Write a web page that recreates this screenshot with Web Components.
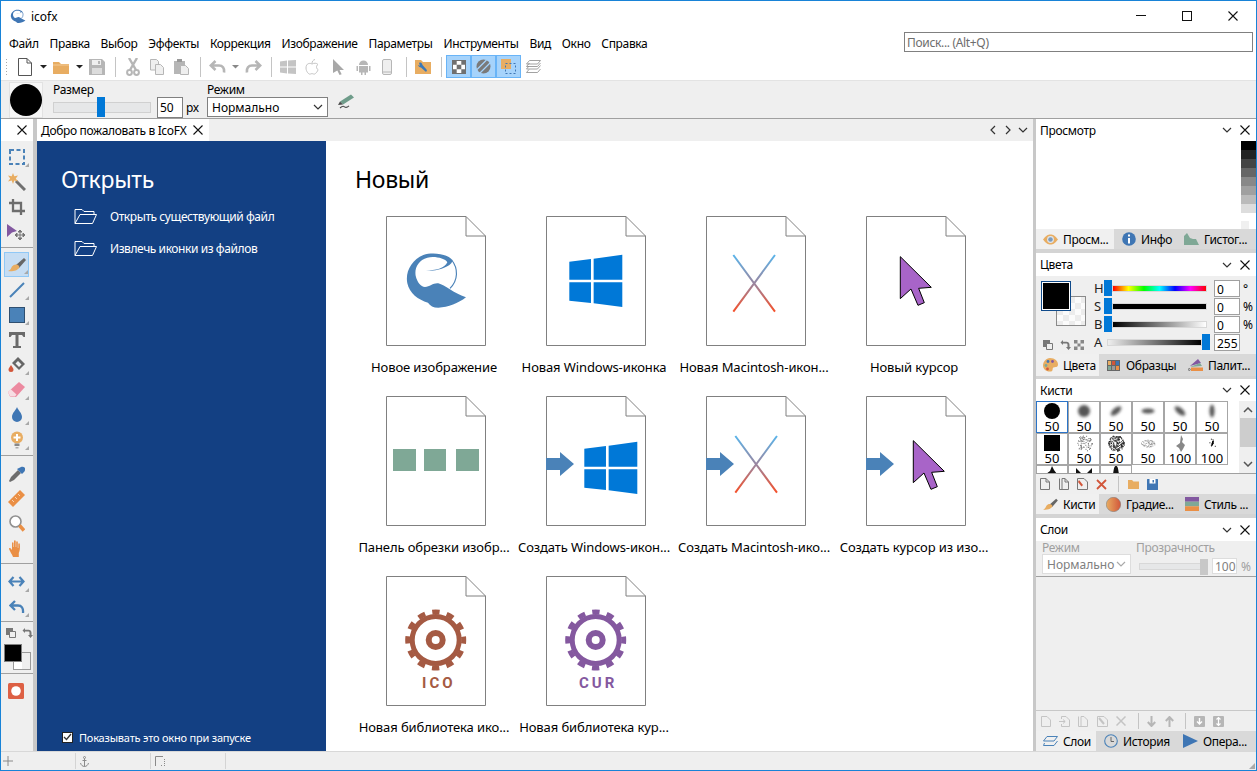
<!DOCTYPE html>
<html lang="ru">
<head>
<meta charset="utf-8">
<title>IcoFX</title>
<style>
  html, body { margin: 0; padding: 0; background: #efefef; }
  body { font: 12px "Noto Sans", "Open Sans", sans-serif; color: #000; overflow: hidden; }
</style>
</head>
<body>
<app-window></app-window>
<script>
const D = "#b6b6b6";
const B = "#4a82b8";
const O = "#e8ad62";
const P = "#c4c4c4";

function seeded(seed) {
  let s = seed;
  return () => { s = (s * 16807) % 2147483647; return s / 2147483647; };
}

const LOGO = "M228 197C255 197 285 190 292 172C285 160 255 153 232 158C205 165 193 190 197 212C202 232 212 245 225 246C240 245 250 233 265 235C285 240 310 265 348 277C325 295 295 307 265 308C250 308 240 302 234 293C205 285 178 265 172 235C165 200 185 165 220 150C250 140 295 148 307 165C310 180 270 200 228 197Z";

const ICONS = {
  chev: [10, 6, `<path d="M1 1l4 4 4-4" fill="none" stroke="#333" stroke-width="1.2"/>`],
  chevl: [10, 6, `<path d="M1 1l4 4 4-4" fill="none" stroke="#aaa" stroke-width="1.2"/>`],
  left: [6, 10, `<path d="M5 1L1 5l4 4" fill="none" stroke="#333" stroke-width="1.2"/>`],
  right: [6, 10, `<path d="M1 1l4 4-4 4" fill="none" stroke="#333" stroke-width="1.2"/>`],
  x: [10, 10, `<path d="M.5 .5l9 9M9.5 .5l-9 9" stroke="#111" stroke-width="1.1"/>`],
  caret: [7, 4, `<path d="M0 0h7L3.5 3.5z" fill="#222"/>`],
  caretd: [7, 4, `<path d="M0 0h7L3.5 3.5z" fill="#888"/>`],
  logo: [16, 15, `<svg viewBox="160 140 195 175" width="16" height="15"><path d="${LOGO}" fill="#3f76b4"/><path d="M305 165C325 190 325 225 300 250" fill="none" stroke="#3f76b4" stroke-width="8"/></svg>`],
  new: [16, 18, `<path d="M1.5 .5H10L14.5 5V17.5H1.5ZM10 .5V5H14.5" fill="#fff" stroke="#555"/>`],
  folder: [16, 13, `<path d="M0 1h6l2 2h8v10H0z" fill="${O}"/><path d="M0 4h16" stroke="#f3cb97"/>`],
  save: [16, 16, `<path d="M0 0h13l3 3v13H0z" fill="${D}"/><path d="M3 1h9v5H3z" fill="#efefef"/><path d="M9 2h2v3H9z" fill="${D}"/><path d="M3 9h10v6H3z" fill="#dcdcdc"/>`],
  cut: [14, 18, `<path d="M3 0l7 12M11 0L4 12" stroke="${D}" stroke-width="2.4" fill="none"/><circle cx="3.5" cy="14.5" r="2.4" fill="none" stroke="${D}" stroke-width="2"/><circle cx="10.5" cy="14.5" r="2.4" fill="none" stroke="${D}" stroke-width="2"/>`],
  copy: [14, 16, `<path d="M.5 .5h6l2 2V11H.5z" fill="#efefef" stroke="${D}"/><path d="M5.5 5.5h5l3 3v7h-8z" fill="#efefef" stroke="${D}"/>`],
  paste: [15, 16, `<path d="M0 2h11v13H0z" fill="${D}"/><path d="M3 0h5v3H3z" fill="#999"/><path d="M6.5 6.5h5l3 3v6h-8z" fill="#efefef" stroke="${D}"/>`],
  undo: [17, 14, `<path d="M6.5 1L1.8 5.5l4.7 4.5M2 5.5h8c3.5 0 5.5 2.5 5 7" fill="none" stroke="${D}" stroke-width="2.6"/>`],
  redo: [17, 14, `<path d="M10.5 1l4.7 4.5-4.7 4.5M15 5.5H7c-3.5 0-5.5 2.5-5 7" fill="none" stroke="${D}" stroke-width="2.6"/>`],
  win: [16, 14, `<path d="M0 1.5l7-1V6.500H0zM8 .5l8-.5v6.500H8zM0 7.500h7v6l-7-1zM8 7.500h8V14l-8-.5z" fill="${P}"/>`],
  apple: [14, 16, `<path d="M7 5C5 3.8 1 4 1 9c0 3.5 3 7 4.500 6 1-.5 2-.5 3 0C10 16 13 12 13 10.5c-2-1-2-4 0-5C11.5 3.8 9 4 7 5zM7 4.500C7 2.500 8 1 10 .5" fill="none" stroke="${P}"/>`],
  cursor: [12, 16, `<path d="M1 0l11 11H7.5l2.2 4.300-2.200.7-2.200-4.500L1 14z" fill="#a8a8a8"/>`],
  android: [15, 16, `<path d="M3 6a4.500 4.500 0 0 1 9 0zM3 7h9v6.500H3zM.5 7h1.500v5H.5zM13 7h1.500v5H13zM5 13h1.500v3H5zM8.500 13H10v3H8.500z" fill="${D}"/>`],
  phone: [10, 16, `<rect x=".5" y=".5" width="9" height="15" rx="1.5" fill="#efefef" stroke="${D}"/><path d="M1 13h8" stroke="${D}"/>`],
  fwrench: [16, 14, `<path d="M0 0h6l2 2h8v12H0z" fill="${O}"/><path d="M4 3c2-1 3 0 3.500 2l4 4.500c.8 1 .3 2-.8 2.300L6 7.500C4.500 7.500 3.500 6.500 3 5l2 .8z" fill="#3b78b8"/>`],
  checker: [14, 14, `<rect width="14" height="14" fill="#fff"/><path d="M0 0h4.700v4.700H0zM9.300 0H14v4.700H9.300zM4.700 4.700h4.600v4.600H4.700zM0 9.300h4.700V14H0zM9.300 9.300H14V14H9.300z" fill="#707070"/><rect x=".5" y=".5" width="13" height="13" fill="none" stroke="#707070"/>`],
  hatch: [15, 15, `<circle cx="7.5" cy="7.5" r="7" fill="#7a7a7a"/><path d="M1 10.500L10.500 1M4 14L14 4" stroke="#a6d3fb" stroke-width="1.300"/>`],
  selbox: [15, 15, `<path d="M0 0h10v10H0z" fill="${O}"/><rect x="4.500" y="4.500" width="10" height="10" fill="none" stroke="#3f76b4" stroke-dasharray="2 2"/>`],
  layers: [15, 14, `<path d="M3.500 .5H14.500L11.500 4H.5z" fill="#fff" stroke="#8a8a8a" stroke-width=".8"/><path d="M.5 6.500H11.500L14.500 3M.5 6.500L3.500 3" fill="none" stroke="#8a8a8a" stroke-width=".8"/><path d="M.5 9H11.500L14.500 5.500M.5 9L3 6" fill="none" stroke="#8a8a8a" stroke-width=".8"/><path d="M.5 12.500H11.500L14.500 9M.5 12.500L3 9.500" fill="none" stroke="#8a8a8a" stroke-width=".8"/>`],
  pen: [18, 15, `<path d="M3 7.500L14 .5l3 3L6 10.500z" fill="#6f9c8a"/><path d="M3 7.500L1 11l5-.5z" fill="#4c4c4c"/><path d="M3 14c2-2 3-2.500 4.500-1.200s2.500 1 4.500-1" fill="none" stroke="#4c4c4c" stroke-width="1.100"/>`],
  marquee: [16, 16, `<rect x="1" y="1" width="14" height="14" fill="none" stroke="${B}" stroke-width="2" stroke-dasharray="4 2.500"/>`],
  wand: [18, 18, `<path d="M8 8l9 9" stroke="#707070" stroke-width="3"/><path d="M5 0l1.300 3.300L10 2.500 7.800 5.500 10 8.500 6.300 7.500 5 11 3.700 7.500 0 8.500 2.200 5.500 0 2.500l3.700.8z" fill="${O}"/>`],
  crop: [16, 16, `<path d="M4 0v12h12M0 4h12v12" fill="none" stroke="#6d6d6d" stroke-width="2.300"/>`],
  selarrow: [19, 16, `<path d="M0 0l10 7-5 1.500L0 13z" fill="#8258a0"/><path d="M13 6v10M8 11h10M13 6l-2 2h4zM13 16l-2-2h4zM8 11l2-2v4zM18 11l-2-2v4z" stroke="#777" fill="#777"/>`],
  brush: [18, 16, `<path d="M8 8L16 1l2 2-7 8z" fill="#666"/><path d="M8 7.500c2.500 0 4 2 3 3.500-1.500 2.500-7 4-11 3 3-1 3-3 4-4.500 1-1.300 2.500-2 4-2z" fill="${O}"/>`],
  brushs: [15, 13, `<svg viewBox="0 0 18 16" width="15" height="13"><path d="M8 8L16 1l2 2-7 8z" fill="#666"/><path d="M8 7.500c2.500 0 4 2 3 3.500-1.500 2.500-7 4-11 3 3-1 3-3 4-4.500 1-1.300 2.500-2 4-2z" fill="${O}"/></svg>`],
  line: [16, 16, `<path d="M1 15L15 1" stroke="${B}" stroke-width="2"/>`],
  rect: [16, 16, `<rect x=".5" y=".5" width="15" height="15" fill="${B}" stroke="#2f4f70"/>`],
  type: [16, 16, `<path d="M0 0h16v5h-1.500L13 3H9.500v11H12v2H4v-2h2.500V3H3L1.500 5H0z" fill="#6a6a6a"/>`],
  fill: [18, 17, `<path d="M10 1l7 7-6 6-7-7z" fill="#666"/><path d="M10 5l3.500 3.500-2.500 2.500L7.500 7.500z" fill="#efefef"/><path d="M3 9c1 2 2.500 3 2.500 4.500a2.500 2.500 0 0 1-5 0C.5 12 2 11 3 9z" fill="#d2563a"/>`],
  eraser: [17, 15, `<path d="M11 0l6 5-9 10-6-.5L0 10z" fill="#ec8aa0"/><path d="M2.500 7l6 5.500L7 14.500 2 14 0 10z" fill="#f7dde3"/>`],
  drop: [12, 16, `<path d="M6 0c1 3 5 6 5 10a5 5 0 0 1-10 0C1 6 5 3 6 0z" fill="#3f76b4"/>`],
  bulb: [14, 18, `<circle cx="7" cy="6.500" r="6" fill="${O}"/><path d="M6 3h2v2.500h2.500v2H8V10H6V7.500H3.500v-2H6z" fill="#fff"/><path d="M4.500 12.500h5V15h-5z" fill="#888"/><path d="M5.500 16h3v1.500h-3z" fill="#aaa"/>`],
  picker: [16, 16, `<path d="M9 4l3 3-7 7-4 2-1-1 2-4z" fill="#6d6d6d"/><path d="M8 3l5 5 1.500-1.500c2-2 2-4 1-5S13 0 10 2z" fill="#3f76b4"/>`],
  ruler: [17, 17, `<path d="M12 0l5 5L5 17l-5-5z" fill="#ea8f45"/><path d="M10 4l2 2M7 7l2 2M4 10l2 2" stroke="#f8d3b0"/>`],
  zoom: [16, 17, `<circle cx="6.500" cy="6.500" r="5.500" fill="#fff" stroke="#909090" stroke-width="1.600"/><path d="M10.500 10.500l4.500 5" stroke="#ea8f45" stroke-width="3.500"/>`],
  hand: [15, 17, `<path d="M4 17C3 14 0 10 0 8.500c1-1 2 0 3 1.500V3c0-1 1.500-1 1.500 0v4h.5V1c0-1 1.700-1 1.700 0v6h.5V2c0-1 1.600-1 1.600 0v6h.5V4c0-1 1.500-1 1.500 0 .5 4 0 7-1 9v4z" fill="#ea8f45"/>`],
  arrows: [17, 11, `<path d="M5.500 1L1.500 5.500l4 4.500M11.500 1l4 4.500-4 4.500M1.500 5.500h14" fill="none" stroke="${B}" stroke-width="2.200"/>`],
  undob: [16, 14, `<path d="M6 1L1.500 5.500 6 10M2 5.500h7c3.500 0 5.500 2.500 5 7.500" fill="none" stroke="${B}" stroke-width="2.300"/>`],
  squares: [10, 10, `<path d="M0 0h7v7H0z" fill="#777"/><path d="M3.500 3.500h6v6h-6z" fill="#efefef" stroke="#777"/>`],
  swap: [11, 10, `<path d="M3 0L.5 2.500 3 5V3.500H6.200c.8 0 1.300.5 1.300 1.200V7H6l2.500 3L11 7H9.500V4.700C9.500 2.900 8.200 1.700 6.500 1.700H3z" fill="#777"/>`],
  fs: [10, 10, `<path d="M0 0h3.500v3.500H0zM6.500 0H10v3.500H6.500zM3.500 3.500h3v3h-3zM0 6.500h3.500V10H0zM6.500 6.500H10V10H6.500z" fill="#888"/>`],
  record: [16, 16, `<rect width="16" height="16" rx="1.5" fill="#dd6044"/><circle cx="8" cy="8" r="4.800" fill="#fff"/>`],
  plus: [10, 10, `<path d="M5 0v10M0 5h10" stroke="#8a8a8a"/>`],
  anchor: [9, 11, `<circle cx="4.500" cy="1.500" r="1" fill="none" stroke="#8a8a8a"/><path d="M4.500 2.500V10.500M2.500 4.500h4M.5 7c.5 2 2 3.500 4 3.500S8 9 8.500 7" fill="none" stroke="#8a8a8a"/>`],
  corners: [10, 10, `<path d="M.5 10V.5H8" fill="none" stroke="#8a8a8a"/><path d="M9.500 3v7M6 9.500h2" stroke="#8a8a8a" stroke-dasharray="1 1"/>`],
  folderline: [23, 17, `<path d="M1 15.500V1.500h7l2 2h10v3M1 15.500L6 6.500h16.500l-4 9z" fill="none" stroke="#fff"/>`],
  eye: [15, 11, `<path d="M0 5.500C3 1.500 5 .5 7.500 .5s4.500 1 7.500 5c-3 4-5 5-7.500 5s-4.500-1-7.500-5z" fill="${O}"/><circle cx="7.500" cy="5.500" r="3.400" fill="#dfe7ef"/><circle cx="7.500" cy="5.500" r="2.300" fill="#7d9cbd"/>`],
  info: [15, 14, `<g transform="translate(1 0)"><circle cx="7" cy="7" r="6.800" fill="#3f76b4"/><rect x="6" y="2.500" width="2" height="2" fill="#fff"/><rect x="6" y="6" width="2" height="5.500" fill="#fff"/></g>`],
  hist: [15, 12, `<path d="M0 12V3l3-3 3 5 3 1 3 0 3 6z" fill="#7fa896"/>`],
  palette: [15, 14, `<path d="M7 0c5 0 8 3 8 6.500 0 3-3 2.500-4.500 3s0 3.500-2.500 4C3 14 0 11 0 7.500S3 0 7 0z" fill="${O}"/><circle cx="5" cy="3.500" r="1.400" fill="#3f76b4"/><circle cx="9.500" cy="3.500" r="1.400" fill="#8258a0"/><circle cx="3" cy="7.500" r="1.400" fill="#7fa896"/><circle cx="4.500" cy="11" r="1.400" fill="#d2563a"/>`],
  swatches: [15, 11, `<g transform="translate(1 0)"><rect width="13" height="11" fill="#666"/><rect x="1" y="1" width="3" height="4" fill="${O}"/><rect x="5" y="1" width="3" height="4" fill="#d2563a"/><rect x="9" y="1" width="3" height="4" fill="#3f76b4"/><rect x="1" y="6" width="3" height="4" fill="#7fa896"/><rect x="5" y="6" width="3" height="4" fill="#999"/><rect x="9" y="6" width="3" height="4" fill="#ea8f45"/></g>`],
  fan: [15, 12, `<path d="M2 7L10 0l3 4z" fill="#8258a0"/><path d="M2 8l10-4 2 3z" fill="#7fa896"/><path d="M3 8.500h12V12H3z" fill="#ea8f45"/><circle cx="1.300" cy="10.500" r="1" fill="none" stroke="#555" stroke-width=".7"/>`],
  gradient: [15, 15, `<defs><linearGradient id="g"><stop offset="0" stop-color="#e8ad62"/><stop offset="1" stop-color="#d2563a"/></linearGradient></defs><circle cx="7.500" cy="7.500" r="7.200" fill="url(#g)" stroke="#777" stroke-width=".5"/>`],
  stripes: [14, 14, `<rect width="14" height="4.700" fill="#8258a0"/><rect y="4.700" width="14" height="4.600" fill="#7fa896"/><rect y="9.300" width="14" height="4.700" fill="#ea8f45"/>`],
  layersb: [15, 10, `<path d="M4 .5h10.500L11 5H.5zM1.500 7L.5 9.500H11L14.500 5" fill="none" stroke="${B}"/>`],
  clock: [15, 14, `<g transform="translate(1 0)"><circle cx="7" cy="7" r="6.300" fill="none" stroke="${B}" stroke-width="1.100"/><path d="M7 3v4.500h3" fill="none" stroke="#666"/></g>`],
  play: [15, 14, `<path d="M0 0l15 7-15 7z" fill="#3f76b4"/>`],
  pnew: [10, 12, `<path d="M.5 .5H6L9.500 4V11.500H.5zM6 .5V4H9.500" fill="#efefef" stroke="#777"/>`],
  pdup: [10, 12, `<path d="M.5 .5V11.500H9.500V4L6 .5H3V11.500M6 .5V4H9.500" fill="none" stroke="#777"/>`],
  pedit: [11, 12, `<path d="M.5 .5H7L10.500 4V11.500H.5z" fill="#efefef" stroke="#777"/><path d="M2 2l4 5-1.500 1.500L1 4z" fill="#d2563a"/>`],
  pdel: [11, 11, `<path d="M1 1l9 9M10 1l-9 9" stroke="#d2563a" stroke-width="1.800"/>`],
  pfolder: [11, 9, `<path d="M0 0h4l1.500 1.500H11V9H0z" fill="${O}"/>`],
  psave: [11, 11, `<rect width="11" height="11" rx=".5" fill="#3f76b4"/><rect x="2.500" y="0" width="6" height="4.500" fill="#fff"/><rect x="5.500" y="1" width="1.500" height="2.500" fill="#3f76b4"/>`],
  lnew: [10, 11, `<path d="M.5 .5H6L9.500 4V10.500H.5z" fill="none" stroke="${P}"/>`],
  limp: [11, 11, `<path d="M2.500 3V.5H7L10.500 4V10.500H2.500V8" fill="none" stroke="${P}"/><path d="M0 5.500h6M4 3.500l2.200 2-2.200 2" fill="none" stroke="${P}"/>`],
  ldup: [10, 11, `<path d="M.5 .5V10.500H9.500V4L6 .5H3V10.500" fill="none" stroke="${P}"/>`],
  ledit: [11, 11, `<path d="M.5 .5H7L10.500 4V10.500H.5z" fill="none" stroke="${P}"/><path d="M2 2l5 6" stroke="${P}" stroke-width="2"/>`],
  ldel: [10, 10, `<path d="M.5 .5l9 9M9.500 .5l-9 9" stroke="${P}" stroke-width="1.500"/>`],
  ldown: [9, 11, `<path d="M4.500 0v10M.8 6l3.700 4 3.700-4" fill="none" stroke="${D}" stroke-width="2"/>`],
  lup: [9, 11, `<path d="M4.500 11V1M.8 5l3.700-4 3.700 4" fill="none" stroke="${D}" stroke-width="2"/>`],
  lbot: [11, 11, `<rect width="11" height="11" rx="1" fill="${D}"/><path d="M5.500 2v6M3 5.500l2.500 2.500L8 5.500" fill="none" stroke="#fff" stroke-width="1.400"/>`],
  lboth: [11, 11, `<rect width="11" height="11" rx="1" fill="${D}"/><path d="M5.500 1.500v8M3.500 3.500l2-2 2 2M3.500 7.500l2 2 2-2" fill="none" stroke="#fff" stroke-width="1.200"/>`]
};

class Base extends HTMLElement {
  connectedCallback() {
    if (this.shadowRoot) return;
    this.attachShadow({ mode: "open" });
    this.shadowRoot.innerHTML = this.render();
  }
}

class XIco extends Base {
  render() {
    const [w, h, inner] = ICONS[this.getAttribute("n")];
    return `<style>:host{display:inline-flex;flex:none}svg{display:block}</style>
      <svg width="${w}" height="${h}" viewBox="0 0 ${w} ${h}">${inner}</svg>`;
  }
}

class TitleBar extends Base {
  render() {
    return `<style>
      :host { display: flex; height: 30px; align-items: center; background: #fff; flex: none; }
      .logo { margin-left: 9px; display: flex; }
      .name { margin-left: 5px; flex: 1; }
      .btn { width: 46px; height: 30px; display: flex; align-items: center; justify-content: center; }
      svg { display: block; }
    </style>
    <span class="logo"><x-ico n="logo"></x-ico></span>
    <span class="name">icofx</span>
    <span class="btn"><svg width="10" height="2"><path d="M0 .5h10" stroke="#111"/></svg></span>
    <span class="btn"><svg width="10" height="10"><rect x=".5" y=".5" width="9" height="9" fill="none" stroke="#111"/></svg></span>
    <span class="btn"><x-ico n="x"></x-ico></span>`;
  }
}

class MenuBar extends Base {
  render() {
    const items = ["Файл", "Правка", "Выбор", "Эффекты", "Коррекция", "Изображение", "Параметры", "Инструменты", "Вид", "Окно", "Справка"];
    return `<style>
      :host { display: flex; height: 24px; align-items: center; background: #fff; flex: none; padding: 0 3px 0 8px; }
      nav { display: flex; gap: 10.8px; flex: 1; letter-spacing: var(--ls); }
      .search { width: 345px; height: 18px; border: 1px solid #808080; color: #6d6d6d; line-height: 20px; padding-left: 2px; margin-top: -2px; letter-spacing: var(--ls); }
    </style>
    <nav>${items.map(m => `<span>${m}</span>`).join("")}</nav>
    <div class="search">Поиск... (Alt+Q)</div>`;
  }
}

class ToolStrip extends Base {
  render() {
    const row = [
      ["new", 24], ["caret", 13], ["folder", 22], ["caret", 14], ["save", 22], ["|", 14],
      ["cut", 22], ["copy", 25], ["paste", 24], ["|", 14],
      ["undo", 20], ["caretd", 16], ["redo", 20], ["|", 16],
      ["win", 18], ["apple", 30], ["cursor", 22], ["android", 28], ["phone", 20], ["|", 18],
      ["fwrench", 16], [" ", 5], ["|", 10]
    ];
    const cell = ([n, w]) => n === "|"
      ? `<span class="slot" style="width:${w}px"><i></i></span>`
      : n === " " ? `<span style="width:${w}px"></span>`
      : `<span class="slot" style="width:${w}px"><x-ico n="${n}"></x-ico></span>`;
    return `<style>
      :host { display: flex; height: 25px; background: #fff; flex: none; align-items: stretch; position: relative; border-bottom: 1px solid #e3e3e3; }
      .grip { width: 3px; margin: 3px 5px 3px 4px; background: radial-gradient(circle, #aaa 0.9px, transparent 1px) 0 0 / 3px 3px; }
      .slot { display: flex; align-items: center; justify-content: center; height: 24px; flex: none; }
      i { display: block; width: 1px; height: 20px; background: #c4c4c4; }
      .on { width: 23px; height: 21px; margin-top: 0; background: #a6d3fb; border: 1px solid #69b4f7; display: flex; align-items: center; justify-content: center; flex: none; }
    </style>
    <span class="grip"></span>
    ${row.map(cell).join("")}
    <span class="on"><x-ico n="checker"></x-ico></span>
    <span class="on"><x-ico n="hatch"></x-ico></span>
    <span class="on"><x-ico n="selbox"></x-ico></span>
    <span class="slot" style="width:24px"><x-ico n="layers"></x-ico></span>`;
  }
}

class OptionsBar extends Base {
  render() {
    return `<style>
      :host { display: flex; height: 37px; background: #efefef; flex: none; border-bottom: 1px solid #a0a0a0; }
      .brush { width: 32px; height: 34px; margin: 1px 0 0 8px; background: #f6f6f6; display: flex; align-items: center; justify-content: center; border: 1px solid #e2e2e2; }
      .brush b { display: block; width: 32px; height: 32px; border-radius: 50%; background: #000; }
      .col { display: flex; flex-direction: column; }
      .lbl { height: 15px; line-height: 18px; letter-spacing: var(--ls); }
      .size { margin-left: 10px; width: 144px; }
      .size .ctl { display: flex; align-items: center; height: 22px; }
      .track { position: relative; width: 98px; height: 11px; background: #e6e7e8; border: 1px solid #d0d0d0; box-sizing: border-box; flex: none; }
      .track b { position: absolute; left: 43px; top: -6px; width: 8px; height: 20px; background: #0078d7; }
      .num { width: 22px; height: 19px; margin-left: 6px; border: 1px solid #808080; background: #fff; line-height: 19px; padding-left: 2px; font-size: 12px; flex: none; }
      .px { margin-left: 3px; letter-spacing: var(--ls); }
      .mode { margin-left: 10px; }
      .sel { height: 18px; margin-top: 1px; border: 1px solid #808080; background: #fff; display: flex; align-items: center; justify-content: space-between; padding: 0 4px; width: 111px; }
      .pen { margin: 13px 0 0 9px; }
    </style>
    <div class="brush"><b></b></div>
    <div class="col size">
      <span class="lbl">Размер</span>
      <div class="ctl"><div class="track"><b></b></div><span class="num">50</span><span class="px">px</span></div>
    </div>
    <div class="col mode">
      <span class="lbl">Режим</span>
      <div class="sel"><span>Нормально</span><x-ico n="chev"></x-ico></div>
    </div>
    <div class="pen"><x-ico n="pen"></x-ico></div>`;
  }
}

class ToolBtn extends Base {
  render() {
    const more = this.hasAttribute("more");
    return `<style>
      :host { display: flex; width: 25px; height: 25px; align-items: center; justify-content: center; position: relative; box-sizing: border-box; margin-left: 3px; }
      :host([active]) { background: #c6ddf3; border: 1px solid #90c8f6; }
      .tri { position: absolute; right: 0; bottom: 2px; width: 0; height: 0; border-left: 4px solid transparent; border-bottom: 4px solid #a8a8a8; }
    </style>
    <x-ico n="${this.getAttribute("n")}"></x-ico>${more ? '<span class="tri"></span>' : ""}`;
  }
}

class ToolColumn extends Base {
  render() {
    const b = (n, a = "") => `<tool-btn n="${n}" ${a}></tool-btn>`;
    return `<style>
      :host { display: flex; flex-direction: column; width: 32px; background: #efefef; flex: none; }
      .close { height: 22px; background: #fff; display: flex; align-items: center; justify-content: flex-end; padding-right: 6px; flex: none; }
      hr { margin: 0; border: 0; height: 1px; background: #a0a0a0; flex: none; }
      .g { display: flex; flex-direction: column; flex: none; }
      .colors { height: 51px; position: relative; flex: none; }
      .mini { display: flex; gap: 6px; padding: 6px 0 0 5px; }
      .fg, .bg { position: absolute; box-sizing: border-box; }
      .fg { left: 3px; top: 22px; width: 18px; height: 18px; background: #000; border: 1px solid #808080; z-index: 1; }
      .bg { left: 12px; top: 30px; width: 18px; height: 18px; background: linear-gradient(90deg, #fff 50%, #efefef 50%); border: 1px solid #999; }
      .rec { padding: 9px 0 0 7px; }
    </style>
    <div class="close"><x-ico n="x"></x-ico></div>
    <div class="g" style="padding:3px 0">${b("marquee", "more")}${b("wand")}${b("crop")}${b("selarrow")}</div>
    <hr>
    <div class="g" style="padding:4px 0 3px">${b("brush", "more active")}${b("line", "more")}${b("rect", "more")}${b("type")}${b("fill", "more")}${b("eraser", "more")}${b("drop", "more")}${b("bulb", "more")}</div>
    <hr>
    <div class="g" style="padding:5px 0 2px">${b("picker")}${b("ruler")}${b("zoom")}${b("hand")}</div>
    <hr>
    <div class="g" style="padding:5px 0 2px">${b("arrows", "more")}${b("undob", "more")}</div>
    <hr>
    <div class="colors">
      <div class="mini"><x-ico n="squares"></x-ico><x-ico n="swap"></x-ico></div>
      <div class="fg"></div><div class="bg"></div>
    </div>
    <hr>
    <div class="rec"><x-ico n="record"></x-ico></div>`;
  }
}

class NewTile extends Base {
  glyph(kind) {
    const win = `<path d="M658 170l65-8v62h-65zM731 161l86-12v75h-86zM658 232h65v62l-65-7zM731 232h86v74l-86-11z" fill="#0078d7"/>`;
    const mac = `<defs><linearGradient id="mx" gradientUnits="userSpaceOnUse" x1="0" y1="150" x2="0" y2="320"><stop offset="0" stop-color="#5ab4ea"/><stop offset=".5" stop-color="#9a86a0"/><stop offset="1" stop-color="#f5502a"/></linearGradient></defs>
      <path d="M160 150L285 320M285 150L160 320" stroke="url(#mx)" stroke-width="6" fill="none"/>`;
    const cur = `<path d="M661 155l93 92-38 3 17 43-19 8-21-49-32 29z" fill="#a864c8" stroke="#000" stroke-width="3"/>`;
    const arrow = `<path d="M0 62h14v-6l14 12-14 12v-6H0z" fill="${B}"/>`;
    const gear = (color, label, lx) => `
      <circle cx="49.700" cy="64" r="23.500" fill="none" stroke="${color}" stroke-width="5"/>
      <circle cx="49.700" cy="64" r="28" fill="none" stroke="${color}" stroke-width="5" stroke-dasharray="7.330 7.330" stroke-dashoffset="3.660"/>
      <circle cx="49.700" cy="64" r="7" fill="none" stroke="${color}" stroke-width="6"/>
      <text x="${lx}" y="112" font-family="Roboto" font-weight="bold" font-size="15" letter-spacing="3" fill="${color}">${label}</text>`;
    return {
      logo: `<g transform="translate(-36 -11) scale(.3333)"><path d="${LOGO}" fill="${B}"/><path d="M305 165C325 190 325 225 300 250" fill="none" stroke="${B}" stroke-width="3.500"/></g>`,
      win: `<g transform="translate(-196 -11) scale(.3333)">${win}</g>`,
      mac: `<g transform="translate(-26 -11) scale(.3333)">${mac}</g>`,
      cur: `<g transform="translate(-186 -11) scale(.3333)">${cur}</g>`,
      crop: `<path d="M7 53h23v22H7zM38 53h22v22H38zM70 53h23v22H70z" fill="#7fa896"/>`,
      win2: arrow + `<g transform="translate(-181 -4) scale(.3333)">${win}</g>`,
      mac2: arrow + `<g transform="translate(-24 -10) scale(.3333)">${mac}</g>`,
      cur2: arrow + `<g transform="translate(-173 -7) scale(.3333)">${cur}</g>`,
      ico: gear("#a55a43", "ICO", 36),
      cur3: gear("#84589f", "CUR", 33)
    }[kind];
  }
  render() {
    return `<style>
      :host { display: flex; flex-direction: column; align-items: center; width: 160px; }
      svg { display: block; flex: none; }
      .t { margin: 11px 4px 0 0; height: 20px; line-height: 20px; white-space: nowrap; font-size: 13px; letter-spacing: var(--ls13); text-align: center; width: 156px; }
    </style>
    <svg width="100" height="130" viewBox="0 0 100 130">
      <path d="M.5 .5H80L99.500 20V129.500H.5Z" fill="#fff" stroke="#808080"/>
      <path d="M80 .5V20H99.500" fill="none" stroke="#808080"/>
      ${this.glyph(this.getAttribute("kind"))}
    </svg>
    <div class="t">${this.getAttribute("label")}</div>`;
  }
}

class WelcomePage extends Base {
  render() {
    const tiles = [
      ["logo", "Новое изображение"], ["win", "Новая Windows-иконка"], ["mac", "Новая Macintosh-икон..."], ["cur", "Новый курсор"],
      ["crop", "Панель обрезки изобр..."], ["win2", "Создать Windows-икон..."], ["mac2", "Создать Macintosh-ико..."], ["cur2", "Создать курсор из изо..."],
      ["ico", "Новая библиотека ико..."], ["cur3", "Новая библиотека кур..."]
    ];
    return `<style>
      :host { display: flex; flex: 1; min-height: 0; }
      .side { width: 289px; background: #134083; color: #fff; display: flex; flex-direction: column; flex: none; }
      h1 { margin: 0; font-weight: 400; font-size: 23px; line-height: 32px; height: 32px; letter-spacing: -.3px; }
      .side h1 { padding: 22px 0 0 24px; margin-bottom: 5px; }
      .open { display: flex; align-items: center; height: 32px; padding-left: 37px; letter-spacing: -.42px; }
      .open span { margin-left: 13px; }
      .show { margin-top: auto; display: flex; align-items: center; height: 16px; padding: 0 0 6px 25px; letter-spacing: -.2px; font-size: 11px; }
      .show b { width: 9px; height: 9px; background: #fff; border: 1px solid #222; display: flex; align-items: center; justify-content: center; margin-right: 6px; box-sizing: content-box; }
      .main { flex: 1; background: #fff; overflow: hidden; }
      .main h1 { padding: 22px 0 0 29px; margin-bottom: 21px; }
      .grid { display: grid; grid-template-columns: repeat(4, 160px); grid-auto-rows: 180px; margin-left: 30px; }
    </style>
    <div class="side">
      <h1>Открыть</h1>
      <div class="open"><x-ico n="folderline"></x-ico><span>Открыть существующий файл</span></div>
      <div class="open"><x-ico n="folderline"></x-ico><span>Извлечь иконки из файлов</span></div>
      <div class="show"><b><svg width="9" height="8"><path d="M1 4l2.500 2.500L8 1" fill="none" stroke="#333" stroke-width="1.300"/></svg></b>Показывать это окно при запуске</div>
    </div>
    <div class="main">
      <h1>Новый</h1>
      <div class="grid">${tiles.map(([k, l]) => `<new-tile kind="${k}" label="${l}"></new-tile>`).join("")}</div>
    </div>`;
  }
}

class DocPane extends Base {
  render() {
    return `<style>
      :host { display: flex; flex-direction: column; flex: 1; min-width: 0; }
      .tabs { height: 22px; background: #efefef; display: flex; align-items: center; flex: none; }
      .tab { height: 22px; width: 162px; background: #fff; display: flex; align-items: center; padding: 0 6px 0 4px; letter-spacing: var(--ls); justify-content: space-between; white-space: nowrap; }
      .nav { margin-left: auto; display: flex; align-items: center; gap: 7px; padding-right: 5px; }
      .nav x-ico:first-child { margin-right: 2px; }
    </style>
    <div class="tabs">
      <div class="tab"><span>Добро пожаловать в IcoFX</span><x-ico n="x"></x-ico></div>
      <div class="nav"><x-ico n="left"></x-ico><x-ico n="right"></x-ico><x-ico n="chev"></x-ico></div>
    </div>
    <welcome-page></welcome-page>`;
  }
}

class DockPanel extends Base {
  render() {
    const tabs = this.getAttribute("tabs").split("|").map(t => t.split(":"));
    return `<style>
      :host { display: flex; flex-direction: column; flex: none; background: #efefef; }
      .head { height: var(--th, 22px); background: #fff; display: flex; align-items: center; padding: 0 2px 0 4px; flex: none; letter-spacing: var(--ls); }
      .head span { flex: 1; }
      .head div { width: 18px; display: flex; justify-content: center; }
      .body { flex: 1; min-height: 0; display: flex; flex-direction: column; }
      .tabs { height: var(--tb, 20px); display: flex; background: #d9d9d9; flex: none; }
      .tab { display: flex; align-items: center; padding-left: 7px; gap: 5px; flex: none; box-sizing: border-box; white-space: nowrap; letter-spacing: var(--ls); }
      .tab:first-child { background: #f0f0f0; }
    </style>
    <div class="head"><span>${this.getAttribute("heading")}</span><div><x-ico n="chev"></x-ico></div><div><x-ico n="x"></x-ico></div></div>
    <div class="body"><slot></slot></div>
    <div class="tabs">${tabs.map(([i, l, w]) => `<div class="tab" style="width:${w}px"><x-ico n="${i}"></x-ico><span>${l}</span></div>`).join("")}</div>`;
  }
}

class ColorSliders extends Base {
  render() {
    const row = (l, u, v, track, last) => `
      <span class="l">${l}</span>
      <div class="t ${last ? "rev" : ""}"><b></b><i style="background:${track}"></i></div>
      <span class="n">${v}</span><span class="u">${u}</span>`;
    return `<style>
      :host { display: flex; flex: 1; background: #efefef; padding: 4px 0 0 5px; box-sizing: border-box; }
      .sw { width: 45px; height: 62px; position: relative; flex: none; }
      .a, .c { position: absolute; box-sizing: border-box; }
      .a { left: 0; top: 1px; width: 30px; height: 30px; background: #000; border: 1px solid #0f4a8a; outline: 1px solid #fff; outline-offset: -2px; z-index: 1; }
      .c { left: 15px; top: 16px; width: 30px; height: 30px; border: 1px solid #8a8a8a; background: repeating-conic-gradient(#fbfbfb 0 25%, #ececec 0 50%) 0 0 / 12px 12px; }
      .m { position: absolute; left: 2px; top: 60px; display: flex; gap: 7px; }
      .m x-ico:last-child { margin-left: -4px; }
      .g { display: grid; grid-template-columns: 10px 106px 26px 14px; grid-auto-rows: 16px; row-gap: 2px; margin-left: 8px; align-items: center; }
      .l { font-size: 13px; color: #222; }
      .t { display: flex; align-items: center; height: 16px; width: 106px; margin-right: 4px; }
      .t b { width: 8px; height: 16px; background: #0078d7; flex: none; }
      .t i { display: block; border: 1px solid #d8d8d8; height: 5px; width: 93px; }
      .rev { flex-direction: row-reverse; justify-content: flex-end; padding-left: 3px; box-sizing: border-box; }
      .n { height: 15px; border: 1px solid #a0a0a0; background: #fff; line-height: 17px; padding-left: 2px; margin-left: 4px; width: 22px; font-size: 12px; }
      .u { padding-left: 7px; font-size: 12px; }
    </style>
    <div class="sw"><div class="a"></div><div class="c"></div>
      <div class="m"><x-ico n="squares"></x-ico><x-ico n="swap"></x-ico><x-ico n="fs"></x-ico></div></div>
    <div class="g">
      ${row("H", "°", "0", "linear-gradient(90deg,#f00,#ff0,#0f0,#0ff,#00f,#f0f,#f00)")}
      ${row("S", "%", "0", "#000")}
      ${row("B", "%", "0", "linear-gradient(90deg,#000,#fff)")}
      ${row("A", "", "255", "linear-gradient(90deg,#eee,#000)", true)}
    </div>`;
  }
}

class BrushCell extends Base {
  spray(seed, n, rx, ry, color, cy = 9) {
    const r = seeded(seed);
    let out = "";
    for (let i = 0; i < n; i++) {
      const a = r() * 6.283, d = Math.sqrt(r());
      const x = 15 + Math.cos(a) * d * rx, y = cy + Math.sin(a) * d * ry;
      out += `<rect x="${x.toFixed(1)}" y="${y.toFixed(1)}" width="1" height="1" fill="${color}"/>`;
    }
    return out;
  }
  shape(k) {
    const soft = (rx, ry, rot) => `<ellipse cx="15" cy="9" rx="${rx}" ry="${ry}" transform="rotate(${rot} 15 9)" fill="#555" filter="url(#b)"/>`;
    return {
      hard: `<circle cx="15" cy="9" r="8" fill="#000"/>`,
      soft: `<circle cx="15" cy="9" r="6" fill="#555" filter="url(#b)"/>`,
      s1: soft(6.5, 3, -40), s2: soft(6.5, 2.5, 0), s3: soft(6.5, 3, 40), s4: soft(6.5, 2.6, 90),
      sq: `<rect x="7" y="1" width="16" height="16" fill="#000"/>`,
      sp1: this.spray(7, 70, 8, 8, "#777"),
      sp2: this.spray(13, 150, 8, 8, "#222"),
      sp3: this.spray(21, 50, 7, 4, "#999"),
      smoke: `<path d="M16 1l2 4-1 3 3 3-2 4-2 3-2-4-3-2 4-3z" fill="#888" filter="url(#c)"/>`,
      sparse: this.spray(31, 10, 3, 8, "#222") + `<path d="M15 8l2-2-1 5-2 2z" fill="#000"/>`,
      p1: `<path d="M15 0l2 4 3 4H9l4-3z" fill="#111"/>`,
      p2: `<path d="M7 2l6 6h4l6-6v6H7z" fill="#111"/>`,
      p3: `<path d="M15 0c2 0 2 3 3 8h-6c1-5 1-8 3-8z" fill="#111"/>`
    }[k];
  }
  render() {
    const v = this.getAttribute("v");
    return `<style>
      :host { display: block; width: 32px; height: 32px; box-sizing: border-box; border: 1px solid #a6a6a6; background: #fff; text-align: center; }
      :host([sel]) { border-color: #2b74c8; }
      svg { display: block; }
      span { display: block; font-size: 13px; line-height: 13px; letter-spacing: 0; }
    </style>
    <svg width="30" height="18"><defs><filter id="b" x="-50%" y="-50%" width="200%" height="200%"><feGaussianBlur stdDeviation="1.400"/></filter><filter id="c"><feGaussianBlur stdDeviation=".7"/></filter></defs>${this.shape(this.getAttribute("k"))}</svg>
    ${v ? `<span>${v}</span>` : ""}`;
  }
}

class BrushList extends Base {
  render() {
    const list = [["hard", 50], ["soft", 50], ["s1", 50], ["s2", 50], ["s3", 50], ["s4", 50], ["sq", 50], ["sp1", 50], ["sp2", 50], ["sp3", 50], ["smoke", 100], ["sparse", 100], ["p1"], ["p2"], ["p3"]];
    return `<style>
      :host { display: flex; height: 72px; background: #fff; flex: none; border-bottom: 1px solid #a0a0a0; }
      .g { display: grid; grid-template-columns: repeat(6, 32px); grid-auto-rows: 32px; width: 203px; height: 72px; overflow: hidden; align-content: start; }
      .sb { width: 17px; background: #efefef; display: flex; flex-direction: column; align-items: center; justify-content: space-between; padding: 6px 0; box-sizing: border-box; position: relative; }
      .th { position: absolute; left: 1px; right: 0; top: 17px; height: 29px; background: #cdcdcd; }
    </style>
    <div class="g">${list.map(([k, v], i) => `<brush-cell k="${k}" ${v ? `v="${v}"` : ""} ${i === 0 ? "sel" : ""}></brush-cell>`).join("")}</div>
    <div class="sb"><svg width="10" height="6"><path d="M1 5l4-4 4 4" fill="none" stroke="#555" stroke-width="1.500"/></svg><span class="th"></span><svg width="10" height="6"><path d="M1 1l4 4 4-4" fill="none" stroke="#555" stroke-width="1.500"/></svg></div>`;
  }
}

class IconRow extends Base {
  render() {
    const items = this.getAttribute("items").split(" ");
    return `<style>
      :host { display: flex; align-items: center; height: 20px; flex: none; background: #efefef; }
      span { display: flex; align-items: center; justify-content: center; height: 20px; }
      i { display: block; width: 1px; height: 16px; background: #c4c4c4; }
    </style>
    ${items.map(s => {
      const [n, w] = s.split(":");
      return n === "|" ? `<span style="width:${w}px"><i></i></span>` : `<span style="width:${w}px"><x-ico n="${n}"></x-ico></span>`;
    }).join("")}`;
  }
}

class LayerProps extends Base {
  render() {
    return `<style>
      :host { display: grid; grid-template-columns: 94px 1fr; grid-template-rows: 13px 23px; height: 36px; box-sizing: border-box; border-bottom: 1px solid #a0a0a0; padding-left: 6px; color: #a0a0a0; flex: none; letter-spacing: var(--ls); }
      .lab { line-height: 14px; }
      .lab:first-child { padding-left: 2px; }
      .sel { height: 18px; border: 1px solid #ddd; background: #fff; display: flex; align-items: center; justify-content: space-between; padding: 0 4px; width: 79px; color: #808080; letter-spacing: 0; }
      .op { display: flex; align-items: center; height: 16px; margin-top: 4px; }
      .tr { width: 69px; height: 7px; background: #e6e7e8; border: 1px solid #d8d8d8; position: relative; margin-left: 3px; box-sizing: border-box; }
      .tr b { position: absolute; right: -1px; top: -5px; width: 8px; height: 16px; background: #c8c8c8; }
      .n { height: 14px; border: 1px solid #ddd; background: #fff; color: #808080; margin-left: 4px; line-height: 15px; padding-left: 2px; letter-spacing: 0; width: 21px; }
      .p { margin-left: 4px; }
    </style>
    <span class="lab">Режим</span><span class="lab">Прозрачность</span>
    <div class="sel"><span>Нормально</span><x-ico n="chevl"></x-ico></div>
    <div class="op"><div class="tr"><b></b></div><span class="n">100</span><span class="p">%</span></div>`;
  }
}

class PreviewStrip extends Base {
  render() {
    const shades = ["#000", "#222", "#444", "#666", "#888", "#a0a0a0", "#bbb", "#ddd"];
    return `<style>
      :host { display: flex; flex-direction: column; align-items: flex-end; flex: 1; background: #fff; }
      i { display: block; width: 15px; height: 9px; flex: none; }
      .ch { height: 16px; background: linear-gradient(#fff 50%, transparent 50%), linear-gradient(90deg, #f0f0f0 50%, #fff 50%); }
    </style>
    ${shades.map(c => `<i style="background:${c}"></i>`).join("")}<i class="ch"></i>`;
  }
}

class RightDock extends Base {
  render() {
    return `<style>
      :host { display: flex; flex-direction: column; width: 220px; flex: none; gap: 0; background: #d4d4d4; }
      .sp { flex: none; }
      .fill { flex: 1; }
    </style>
    <dock-panel heading="Просмотр" style="height:130px" tabs="eye:Просм...:78|info:Инфо:63|hist:Гистог...:79"><preview-strip></preview-strip></dock-panel>
    <div class="sp" style="height:4px"></div>
    <dock-panel heading="Цвета" style="height:123px;--th:23px;--tb:22px" tabs="palette:Цвета:63|swatches:Образцы:82|fan:Палит...:75"><color-sliders></color-sliders></dock-panel>
    <div class="sp" style="height:3px"></div>
    <dock-panel heading="Кисти" style="height:135px" tabs="brushs:Кисти:63|gradient:Градие...:79|stripes:Стиль ...:78">
      <brush-list></brush-list>
      <icon-row items="pnew:17 pdup:21 pedit:17 pdel:21 |:12 pfolder:18 psave:20"></icon-row>
    </dock-panel>
    <div class="sp" style="height:4px"></div>
    <dock-panel heading="Слои" style="height:233px;--th:23px" tabs="layersb:Слои:60|clock:История:80|play:Опера...:80">
      <layer-props></layer-props>
      <div class="fill"></div>
      <div style="border-top:1px solid #c8c8c8"></div>
      <icon-row items="lnew:19 limp:18 ldup:20 ledit:18 ldel:20 |:14 ldown:13 lup:23 |:8 lbot:20 lboth:19"></icon-row>
    </dock-panel>`;
  }
}

class StatusBar extends Base {
  render() {
    return `<style>
      :host { display: flex; height: 19px; background: #efefef; flex: none; border-top: 1px solid #d8d8d8; box-sizing: border-box; position: relative; }
      .c { width: 75px; height: 16px; margin-top: 1px; box-sizing: border-box; border-right: 1px solid #d4d4d4; display: flex; align-items: center; padding-left: 2px; }
      .c.p { padding-left: 4px; }
      .grip { position: absolute; right: 1px; bottom: 1px; width: 6px; height: 6px; background: radial-gradient(circle, #aaa .9px, transparent 1px) 0 0 / 2px 2px; clip-path: polygon(100% 0, 100% 100%, 0 100%); }
    </style>
    <div class="c"><x-ico n="plus"></x-ico></div>
    <div class="c p"><x-ico n="anchor"></x-ico></div>
    <div class="c p"><x-ico n="corners"></x-ico></div>
    <span class="grip"></span>`;
  }
}

class AppWindow extends Base {
  render() {
    return `<style>
      :host { display: flex; flex-direction: column; width: 1257px; height: 771px; box-sizing: border-box; border: 1px solid #1883d7; background: #efefef; --ls: -.33px; --ls13: -.1px; }
      .main { display: flex; flex: 1; min-height: 0; }
      .split { flex: none; background: #c8c8c8; }
    </style>
    <title-bar></title-bar>
    <menu-bar></menu-bar>
    <tool-strip></tool-strip>
    <options-bar></options-bar>
    <div class="main">
      <tool-column></tool-column>
      <div class="split" style="width:4px"></div>
      <doc-pane></doc-pane>
      <div class="split" style="width:3px"></div>
      <right-dock></right-dock>
    </div>
    <status-bar></status-bar>`;
  }
}

customElements.define("x-ico", XIco);
customElements.define("title-bar", TitleBar);
customElements.define("menu-bar", MenuBar);
customElements.define("tool-strip", ToolStrip);
customElements.define("options-bar", OptionsBar);
customElements.define("tool-btn", ToolBtn);
customElements.define("tool-column", ToolColumn);
customElements.define("new-tile", NewTile);
customElements.define("welcome-page", WelcomePage);
customElements.define("doc-pane", DocPane);
customElements.define("dock-panel", DockPanel);
customElements.define("color-sliders", ColorSliders);
customElements.define("brush-cell", BrushCell);
customElements.define("brush-list", BrushList);
customElements.define("icon-row", IconRow);
customElements.define("layer-props", LayerProps);
customElements.define("preview-strip", PreviewStrip);
customElements.define("right-dock", RightDock);
customElements.define("status-bar", StatusBar);
customElements.define("app-window", AppWindow);
</script>
</body>
</html>
